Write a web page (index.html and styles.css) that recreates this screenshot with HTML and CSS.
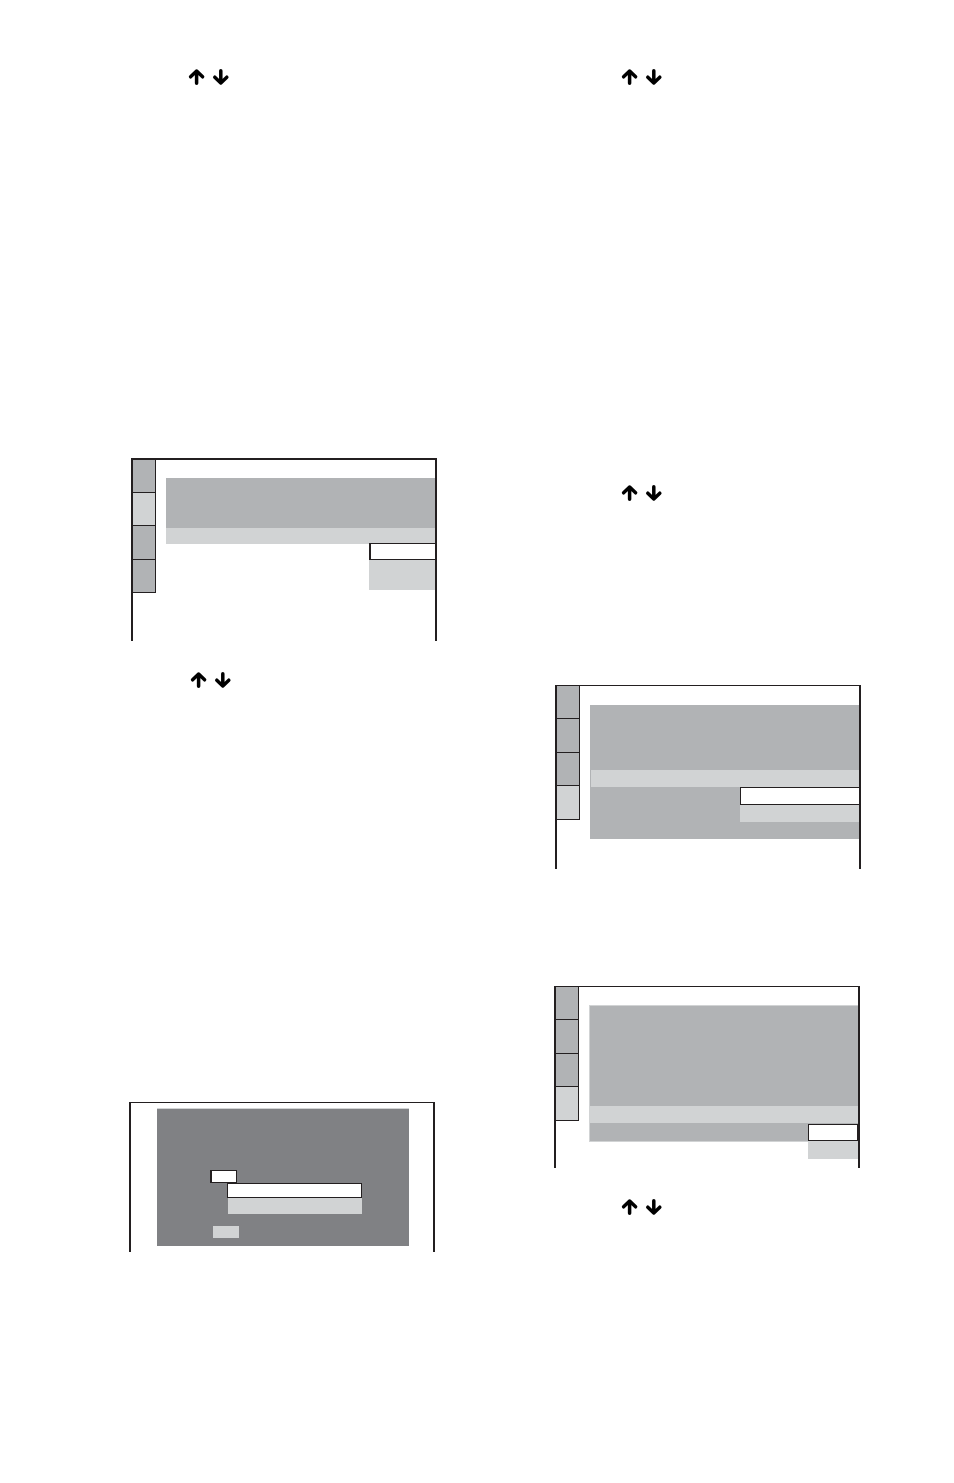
FILE: index.html
```html
<!DOCTYPE html>
<html lang="en">
<head>
    <meta charset="UTF-8">
    <meta name="viewport" content="width=device-width, initial-scale=1.0">
    <title>Setup Menus</title>
    <link rel="stylesheet" href="styles.css">
</head>
<body>
    <!-- shared arrow pair -->
    <svg class="defs" width="0" height="0" aria-hidden="true">
        <symbol id="up-down" viewBox="0 0 42 18">
            <path d="M8.6 15.2V3M2.6 8.8L8.6 3L14.6 8.8"/>
            <path d="M32.8 2.8V15M26.8 9.2L32.8 15L38.8 9.2"/>
        </symbol>
    </svg>

    <main class="page">
        <div class="column">
            <section class="step first">
                <svg class="arrows"><use href="#up-down"/></svg>
            </section>

            <section class="step end language">
                <div class="screen screen-language">
                    <div class="tabs">
                        <div class="tab"></div>
                        <div class="tab active"></div>
                        <div class="tab"></div>
                        <div class="tab"></div>
                    </div>
                    <div class="panel">
                        <div class="rows"></div>
                        <div class="current"></div>
                    </div>
                    <div class="menu">
                        <div class="selected"></div>
                        <div class="option"></div>
                    </div>
                </div>
                <svg class="arrows"><use href="#up-down"/></svg>
            </section>

            <section class="step timer">
                <div class="screen screen-timer">
                    <div class="dialog">
                        <div class="field"></div>
                        <div class="list">
                            <div class="selected"></div>
                            <div class="option"></div>
                        </div>
                        <div class="confirm"></div>
                    </div>
                </div>
            </section>
        </div>

        <div class="column right">
            <section class="step first">
                <svg class="arrows"><use href="#up-down"/></svg>
            </section>

            <section class="step second">
                <svg class="arrows"><use href="#up-down"/></svg>
            </section>

            <section class="step end video">
                <div class="screen screen-video">
                    <div class="tabs">
                        <div class="tab"></div>
                        <div class="tab"></div>
                        <div class="tab"></div>
                        <div class="tab active"></div>
                    </div>
                    <div class="panel">
                        <div class="rows"></div>
                        <div class="current"></div>
                        <div class="rows-after"></div>
                    </div>
                    <div class="menu">
                        <div class="selected"></div>
                        <div class="option"></div>
                    </div>
                </div>
            </section>

            <section class="step other">
                <div class="screen screen-other">
                    <div class="tabs">
                        <div class="tab"></div>
                        <div class="tab"></div>
                        <div class="tab"></div>
                        <div class="tab active"></div>
                    </div>
                    <div class="panel">
                        <div class="rows"></div>
                        <div class="current"></div>
                        <div class="rows-after"></div>
                    </div>
                    <div class="menu">
                        <div class="selected"></div>
                        <div class="option"></div>
                    </div>
                </div>
                <svg class="arrows"><use href="#up-down"/></svg>
            </section>
        </div>
    </main>
</body>
</html>
```

FILE: styles.css
```css
* {
    box-sizing: border-box;
}
body {
    margin: 0;
    min-height: 100vh;
    background-color: #fff;
    font-family: "Liberation Sans", Arial, sans-serif;
}
.defs {
    position: absolute;
}
.page {
    display: grid;
    grid-template-columns: 308fr 307fr;
    column-gap: 117px;
    padding: 68px 93px 68px 129px;
}
.column {
    display: flex;
    flex-direction: column;
}

/* steps */
.step {
    width: 100%;
    max-width: 306px;
}
.step.end {
    align-self: flex-end;
}
.language {
    margin-top: 372px;
}
.timer {
    margin-top: 413px;
}
.second {
    margin-top: 398px;
}
.video {
    margin-top: 183px;
}
.other {
    margin-top: 117px;
}
.arrows {
    display: block;
    width: 42px;
    height: 18px;
    margin-left: 59px;
    fill: none;
    stroke: #000;
    stroke-width: 3.5;
    stroke-linecap: round;
    stroke-linejoin: round;
}
.right .arrows {
    margin-left: 67px;
}
.screen + .arrows {
    margin-top: 30px;
}

/* tv screens */
.screen {
    position: relative;
    display: flex;
    align-items: flex-start;
    border: 2px solid #231f20;
    border-top-width: 1px;
    border-bottom: none;
}
.screen-language {
    border-top-width: 2px;
    padding-bottom: 48px;
}
.screen-video {
    padding-bottom: 30px;
}
.screen-other {
    padding-bottom: 26px;
}
.screen-timer {
    padding: 5px 24px 6px 26px;
}
.tabs {
    display: grid;
    grid-template-rows: 33px 34px 33px 34px;
    width: 23px;
    border-right: 1px solid #231f20;
}
.screen-language .tabs {
    grid-template-rows: 33px 33px 34px 33px;
}
.tab {
    background: #b1b3b5;
    border-bottom: 1px solid #231f20;
}
.tab.active {
    background: #d1d3d4;
}
.panel {
    flex: 1;
    margin: 18px 0 0 10px;
    background: #b1b3b5;
}
.screen-video .panel {
    margin-top: 19px;
}
.screen-other .panel {
    border: 1px solid #d1d3d4;
    border-right: none;
}
.rows {
    height: 50px;
}
.current {
    height: 16px;
    background: #d1d3d4;
}
.screen-video .rows {
    height: 65px;
}
.screen-other .rows {
    height: 100px;
}
.screen-video .current,
.screen-other .current {
    height: 17px;
}
.screen-video .current {
    border-left: 1px solid #b1b3b5;
}
.screen-video .rows-after {
    height: 52px;
}
.screen-other .rows-after {
    height: 18px;
}

/* drop-down over the panel */
.menu {
    position: absolute;
    right: 0;
    width: 66px;
    top: 83px;
}
.selected {
    height: 17px;
    background: #fff;
    border: 1px solid #231f20;
}
.option {
    height: 17px;
    background: #d1d3d4;
}
.screen-language .selected {
    border-left-width: 2px;
    border-right: none;
}
.screen-language .option {
    height: 30px;
}
.screen-video .menu {
    top: 101px;
    width: 119px;
}
.screen-video .selected {
    height: 18px;
    border-right: none;
}
.screen-other .menu {
    top: 137px;
    width: 50px;
}
.screen-other .option {
    height: 18px;
}

/* timer dialog */
.dialog {
    flex: 1;
    padding: 61px 0 8px;
    background: #808184;
    border-top: 1px solid #d1d3d4;
}
.field {
    width: 27px;
    height: 13px;
    margin-left: 53px;
    background: #fff;
    border: 1px solid #231f20;
    border-left-width: 2px;
}
.list {
    width: 135px;
    margin-left: 70px;
}
.list .selected {
    height: 15px;
}
.list .option {
    height: 16px;
    margin-left: 1px;
}
.confirm {
    width: 26px;
    height: 12px;
    margin: 12px 0 0 56px;
    background: #d1d3d4;
}
```
